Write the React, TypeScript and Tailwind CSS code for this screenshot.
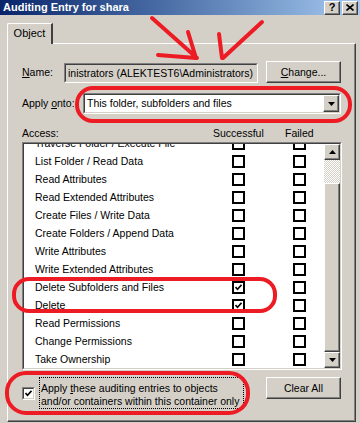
import type { ReactNode } from 'react'

const rows = [
  { label: 'Traverse Folder / Execute File', ok: false },
  { label: 'List Folder / Read Data', ok: false },
  { label: 'Read Attributes', ok: false },
  { label: 'Read Extended Attributes', ok: false },
  { label: 'Create Files / Write Data', ok: false },
  { label: 'Create Folders / Append Data', ok: false },
  { label: 'Write Attributes', ok: false },
  { label: 'Write Extended Attributes', ok: false },
  { label: 'Delete Subfolders and Files', ok: true },
  { label: 'Delete', ok: true },
  { label: 'Read Permissions', ok: false },
  { label: 'Change Permissions', ok: false },
  { label: 'Take Ownership', ok: false },
]

function Check() {
  return (
    <svg width="7" height="7" viewBox="0 0 7 7" className="block">
      <path d="M0.5 3 L2.5 5.2 L6.5 0.8" fill="none" stroke="#000" strokeWidth="1.6" />
    </svg>
  )
}

// flat checkbox used inside the list view
function FlatBox({ checked }: { checked?: boolean }) {
  return (
    <div className="w-[13px] h-[13px] border-2 border-black bg-white flex items-center justify-center shrink-0">
      {checked && <Check />}
    </div>
  )
}

function Raised({ children, className = '' }: { children: ReactNode; className?: string }) {
  return (
    <div
      className={`border border-t-white border-l-white border-r-[#404040] border-b-[#404040] shadow-[inset_-1px_-1px_#808080] bg-[#d4d0c8] flex items-center justify-center ${className}`}
    >
      {children}
    </div>
  )
}

function Sunken({ children, className = '' }: { children: ReactNode; className?: string }) {
  return (
    <div
      className={`border border-t-[#808080] border-l-[#808080] border-r-white border-b-white ${className}`}
    >
      <div className="w-full h-full border border-t-[#404040] border-l-[#404040] border-r-[#d4d0c8] border-b-[#d4d0c8] flex">
        {children}
      </div>
    </div>
  )
}

function Arrow({ up }: { up?: boolean }) {
  return (
    <svg width="7" height="4" viewBox="0 0 7 4" className="block">
      {up ? <path d="M3.5 0 L7 4 L0 4 Z" fill="#000" /> : <path d="M0 0 L7 0 L3.5 4 Z" fill="#000" />}
    </svg>
  )
}

export default function App() {
  return (
    <div className="w-[360px] h-[423px] bg-[#d4d0c8] relative overflow-hidden font-['Liberation_Sans',Arial,sans-serif] text-[10.5px] text-black leading-[13px]">
      {/* title bar */}
      <div className="h-[15px] flex items-center bg-gradient-to-r from-[#0a246a] to-[#a6caf0] pl-[3px] pr-[2px]">
        <span className="text-white font-bold text-[11px]">Auditing Entry for shara</span>
        <div className="ml-auto flex gap-[2px]">
          <Raised className="w-[16px] h-[14px] font-bold text-[11px]">?</Raised>
          <Raised className="w-[16px] h-[14px]">
            <svg width="8" height="7" viewBox="0 0 8 7">
              <path d="M0.5 0.5 L7.5 6.5 M7.5 0.5 L0.5 6.5" stroke="#000" strokeWidth="1.6" />
            </svg>
          </Raised>
        </div>
      </div>

      {/* tab */}
      <div className="ml-[7px] mt-[8px] w-[46px] h-[21px] border-t border-l border-white border-r-2 border-r-[#404040] rounded-tl-[2px] flex items-center justify-center relative z-10 bg-[#d4d0c8] -mb-[1px]">
        <span className="-mt-[1px] text-[11px]">Object</span>
      </div>

      {/* tab panel */}
      <div className="ml-[7px] w-[349px] h-[379px] border border-t-white border-l-white border-r-[#404040] border-b-[#404040] shadow-[inset_-1px_-1px_#808080] pl-[14px] pt-[17px] flex flex-col">
        <div className="flex items-end">
          <span className="w-[42px] pb-[4px]">
            <span className="underline">N</span>ame:
          </span>
          <Sunken className="w-[194px] h-[20px]">
            <span className="pl-[2px] self-center whitespace-nowrap overflow-hidden">inistrators (ALEKTEST6\Administrators)</span>
          </Sunken>
          <Raised className="ml-[8px] w-[75px] h-[22px]">
            <span>
              <span className="underline">C</span>hange...
            </span>
          </Raised>
        </div>

        <div className="flex items-center mt-[10px]">
          <span className="w-[61px]">
            Apply <span className="underline">o</span>nto:
          </span>
          <Sunken className="w-[258px] h-[21px] bg-white">
            <span className="pl-[2px] self-center flex-1">This folder, subfolders and files</span>
            <Raised className="w-[16px] h-[17px]">
              <Arrow />
            </Raised>
          </Sunken>
        </div>

        <div className="flex mt-[13px] h-[15px]">
          <span className="w-[191px]">Access:</span>
          <span className="w-[72px]">Successful</span>
          <span>Failed</span>
        </div>

        <Sunken className="w-[320px] h-[228px] bg-white">
          <div className="flex-1 overflow-hidden">
            <div className="-mt-[10px]">
              {rows.map((r) => (
                <div key={r.label} className="h-[18px] flex items-center pl-[11px]">
                  <span className="w-[197px] whitespace-nowrap">{r.label}</span>
                  <FlatBox checked={r.ok} />
                  <div className="w-[48px]" />
                  <FlatBox />
                </div>
              ))}
            </div>
          </div>
          <div className="w-[16px] flex flex-col">
            <Raised className="h-[16px]">
              <Arrow up />
            </Raised>
            <div className="h-[23px] bg-[repeating-conic-gradient(#d4d0c8_0_25%,#ffffff_0_50%)] bg-[length:2px_2px]" />
            <Raised className="flex-1">
              <span />
            </Raised>
            <Raised className="h-[16px]">
              <Arrow />
            </Raised>
          </div>
        </Sunken>

        <div className="flex mt-[7px]">
          <div className="w-[13px] h-[13px] mt-[10px] border border-t-[#808080] border-l-[#808080] border-r-white border-b-white">
            <div className="w-full h-full border border-t-[#404040] border-l-[#404040] border-r-[#d4d0c8] border-b-[#d4d0c8] bg-white flex items-center justify-center">
              <Check />
            </div>
          </div>
          <div className="ml-[4px] w-[205px] h-[32px] border border-dotted border-black pl-[1px] pt-[4px] whitespace-nowrap">
            Apply <span className="underline">t</span>hese auditing entries to objects
            <br />
            and/or containers within this container only
          </div>
          <Raised className="ml-[22px] w-[75px] h-[22px]">Clear All</Raised>
        </div>
      </div>

      {/* red annotations */}
      <svg className="absolute inset-0 pointer-events-none" width="360" height="423" viewBox="0 0 360 423">
        <g fill="none" stroke="#ed1c24" strokeWidth="4" strokeLinecap="round" strokeLinejoin="round">
          <path d="M152 18 L197 58 M188 32 L196 58 L158 55" />
          <path d="M262 22 L223 58 M219 34 L222 58" />
          <rect x="77" y="88" width="273" height="33" rx="16" />
          <rect x="14" y="279" width="261" height="32" rx="15" />
          <rect x="7" y="373" width="241" height="40" rx="19" />
        </g>
      </svg>
    </div>
  )
}
